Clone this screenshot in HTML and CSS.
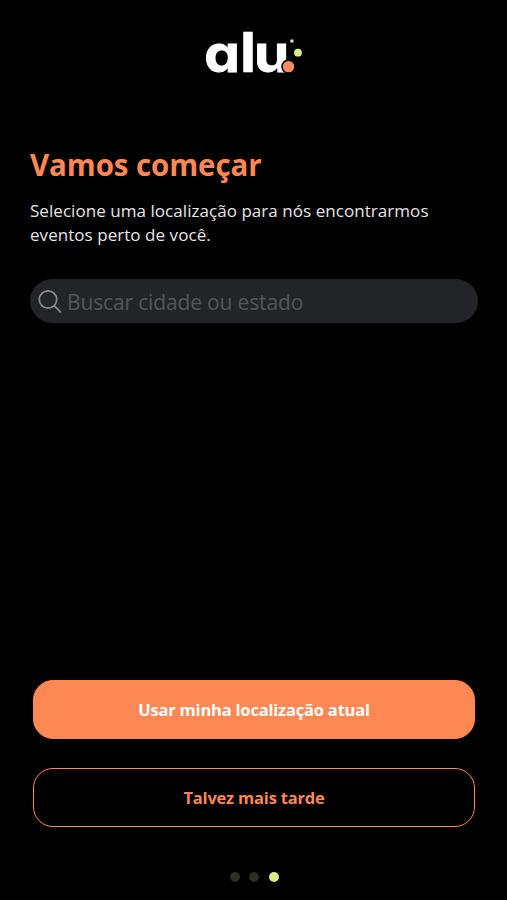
FILE: index.html
```html
<!DOCTYPE html>
<html lang="pt-BR">
<head>
  <meta charset="UTF-8">
  <meta name="viewport" content="width=device-width, initial-scale=1">
  <title>alu - Localização</title>
  <link rel="stylesheet" href="styles.css">
</head>
<body>
  <header class="header">
    <svg class="logo" width="110" height="72" viewBox="-5 0 110 72" role="img" aria-label="alu">
      <text class="logo-text" transform="scale(1.12 1)" x="0.3 31.9 44.6" y="57">a<tspan class="logo-tall">l</tspan>u</text>
      <circle cx="84.5" cy="51.6" r="7.3" fill="#000"/>
      <circle cx="84.5" cy="51.6" r="5.7" fill="#f98b5c"/>
      <circle cx="94" cy="37.7" r="3.9" fill="#dbed84"/>
      <circle cx="87.9" cy="26" r="1.8" fill="#dbed84"/>
    </svg>
  </header>

  <main class="content">
    <h1>Vamos começar</h1>
    <p class="description">Selecione uma localização para nós encontrarmos eventos perto de você.</p>

    <form class="search">
      <svg class="search-icon" width="24" height="24" viewBox="0 0 24 24" fill="none">
        <circle cx="10" cy="10.5" r="8.7"/>
        <path d="M16.3 16.8L22.3 22.8"/>
      </svg>
      <input type="text" placeholder="Buscar cidade ou estado" aria-label="Buscar cidade ou estado">
    </form>
  </main>

  <footer class="actions">
    <button type="button" class="button primary">Usar minha localização atual</button>
    <button type="button" class="button outline">Talvez mais tarde</button>
    <div class="steps">
      <span class="step"></span>
      <span class="step"></span>
      <span class="step active"></span>
    </div>
  </footer>
</body>
</html>
```
FILE: styles.css
```css
* {
  box-sizing: border-box;
}

body {
  display: flex;
  flex-direction: column;
  height: 100vh;
  margin: 0;
  background-color: #000;
  color: #e6e6e6;
  font-family: "Open Sans", "Noto Sans", sans-serif;
}

.header {
  display: flex;
  justify-content: center;
  padding-top: 15px;
}

.logo {
  display: block;
}

/* single-storey "a" for the wordmark */
.logo-text {
  fill: #fff;
  stroke: #fff;
  stroke-width: 0.8;
  font-family: "Inter", sans-serif;
  font-size: 50.5px;
  font-weight: 700;
  font-feature-settings: "cv11";
}

.logo-tall {
  font-size: 54.5px;
  stroke-width: 0.4;
}

.content {
  flex: 1;
  padding: 57px 29px 0 30px;
}

h1 {
  margin: 0;
  color: #fd8853;
  font-size: 29.5px;
  font-weight: 700;
  line-height: 42px;
  letter-spacing: -0.1px;
}

.description {
  margin: 13px 0 0;
  font-size: 17px;
  line-height: 24px;
  letter-spacing: 0.05px;
}

.search {
  display: flex;
  align-items: center;
  gap: 5px;
  height: 44px;
  margin-top: 32px;
  padding: 0 8px;
  border-radius: 22px;
  background-color: #232427;
}

.search-icon {
  flex-shrink: 0;
  stroke: #8c8d90;
  stroke-width: 1.7;
  stroke-linecap: round;
}

.search input {
  flex: 1;
  min-width: 0;
  padding: 2px 0 0;
  border: none;
  outline: none;
  background: none;
  color: #fff;
  font-family: inherit;
  font-size: 21px;
  letter-spacing: -0.15px;
}

.search input::placeholder {
  color: #55565a;
}

.actions {
  display: flex;
  flex-direction: column;
  padding: 0 32px 18px 33px;
}

.button {
  height: 59px;
  padding: 0;
  border: 1px solid #fd8853;
  border-radius: 20px;
  font-family: inherit;
  font-size: 16.5px;
  font-weight: 700;
  letter-spacing: -0.2px;
  cursor: pointer;
}

.primary {
  background-color: #fd8853;
  color: #fff;
}

.outline {
  margin-top: 29px;
  background-color: transparent;
  color: #fd8853;
}

.steps {
  display: flex;
  justify-content: center;
  gap: 9.5px;
  margin-top: 45px;
}

.step {
  width: 10px;
  height: 10px;
  border-radius: 50%;
  background-color: #2c2f1b;
}

.step.active {
  background-color: #dbed84;
}
```
